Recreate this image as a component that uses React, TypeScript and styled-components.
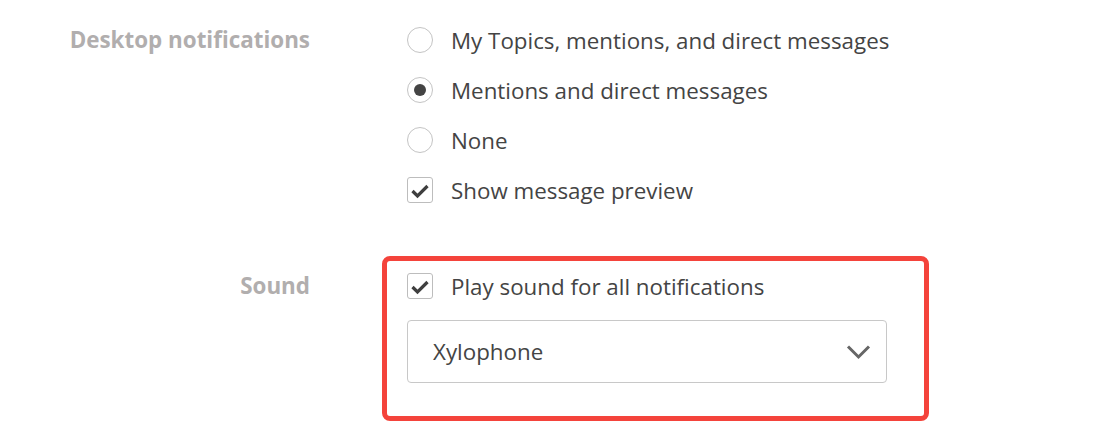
import React from 'react';
import styled, { createGlobalStyle } from 'styled-components';

const GlobalStyle = createGlobalStyle`
  body {
    margin: 0;
    background: #fff;
    font-family: "Open Sans", "Noto Sans", sans-serif;
  }
`;

const Page = styled.div`
  padding: 15px 0 0 60px;
  display: flex;
  flex-direction: column;
  gap: 41px;
`;

const Section = styled.div`
  display: grid;
  grid-template-columns: 250px 1fr;
  column-gap: 72px;
  align-items: start;
`;

const Label = styled.div<{ $offset?: number }>`
  text-align: right;
  font-size: 22.4px;
  font-weight: 700;
  color: #b1aeae;
  line-height: 50px;
  white-space: nowrap;
  margin-top: ${(p) => p.$offset ?? 0}px;
`;

const Options = styled.div`
  display: flex;
  flex-direction: column;
  padding-left: 25px;
`;

const Highlight = styled.div`
  width: 547px;
  box-sizing: border-box;
  border: 5px solid #f4433b;
  border-radius: 8px;
  padding: 0 0 33px 20px;
  display: flex;
  flex-direction: column;
`;

const Row = styled.label`
  display: flex;
  align-items: center;
  gap: 18px;
  height: 50px;
  font-size: 22.35px;
  color: #444;
  white-space: nowrap;
`;

const Radio = styled.span<{ $checked?: boolean }>`
  width: 26px;
  height: 26px;
  box-sizing: border-box;
  border: 1px solid #c4c4c4;
  border-radius: 50%;
  display: flex;
  align-items: center;
  justify-content: center;
  flex: none;
  &::after {
    content: '';
    width: 12px;
    height: 12px;
    border-radius: 50%;
    background: ${(p) => (p.$checked ? '#444' : 'transparent')};
  }
`;

const Box = styled.span`
  width: 26px;
  height: 26px;
  box-sizing: border-box;
  border: 1px solid #bdbdbd;
  border-radius: 3px;
  display: flex;
  flex: none;
`;

const Select = styled.div`
  margin-top: 9px;
  width: 480px;
  height: 63px;
  box-sizing: border-box;
  border: 1px solid #c8c8c8;
  border-radius: 4px;
  display: flex;
  align-items: center;
  justify-content: space-between;
  padding: 0 15px 0 25px;
  font-size: 22.35px;
  color: #444;
`;

const Check = () => (
  <svg width="24" height="24" viewBox="0 0 24 24">
    <polyline points="4.5,13 9.5,18 19.5,8" fill="none" stroke="#3f3f3f" strokeWidth="3.2" />
  </svg>
);

const Chevron = () => (
  <svg width="25" height="16" viewBox="0 0 25 16">
    <polyline points="2,2.5 12.5,13 23,2.5" fill="none" stroke="#666" strokeWidth="3" />
  </svg>
);

export default function App() {
  return (
    <>
      <GlobalStyle />
      <Page>
        <Section>
          <Label>Desktop notifications</Label>
          <Options>
            <Row>
              <Radio />
              My Topics, mentions, and direct messages
            </Row>
            <Row>
              <Radio $checked />
              Mentions and direct messages
            </Row>
            <Row>
              <Radio />
              None
            </Row>
            <Row>
              <Box>
                <Check />
              </Box>
              Show message preview
            </Row>
          </Options>
        </Section>
        <Section>
          <Label $offset={5}>Sound</Label>
          <Highlight>
            <Row>
              <Box>
                <Check />
              </Box>
              Play sound for all notifications
            </Row>
            <Select>
              Xylophone
              <Chevron />
            </Select>
          </Highlight>
        </Section>
      </Page>
    </>
  );
}
